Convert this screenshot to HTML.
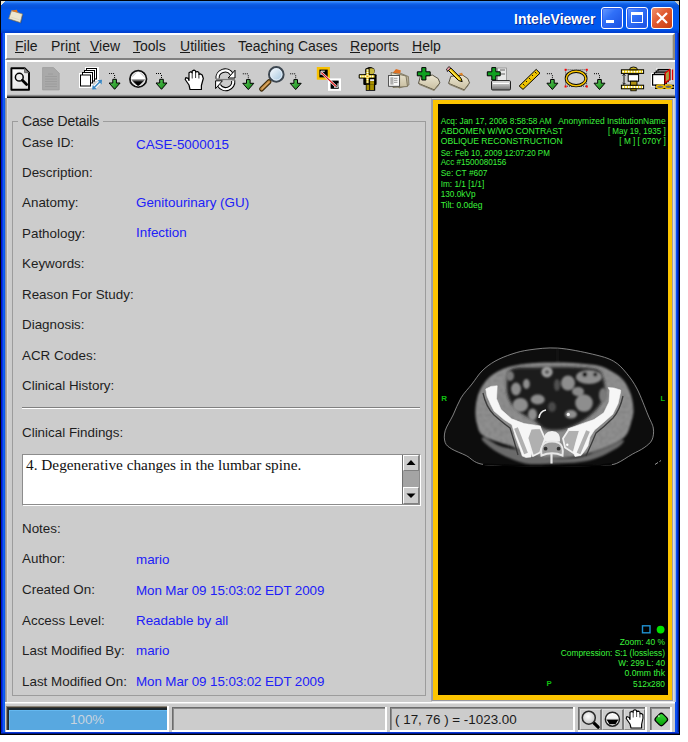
<!DOCTYPE html>
<html><head><meta charset="utf-8">
<style>
*{margin:0;padding:0;box-sizing:border-box}
html,body{width:688px;height:742px;overflow:hidden;background:#fff}
body{position:relative;font-family:"Liberation Sans",sans-serif;font-size:13px;color:#1a1a1a}
.a{position:absolute}
.t{position:absolute;white-space:nowrap;line-height:1}
.lbl{position:absolute;left:22px;white-space:nowrap;line-height:1;color:#1e1e1e;font-size:13.4px}
.val{position:absolute;left:136px;white-space:nowrap;line-height:1;color:#2020f8;font-size:13.4px}
u{text-decoration:none;background:linear-gradient(#1a1a1a,#1a1a1a) no-repeat 0 calc(100% - 1px)/100% 1px}
.sunk{position:absolute;border-top:2px solid #808080;border-left:2px solid #808080;border-right:2px solid #fff;border-bottom:2px solid #fff}
</style></head><body>
<!-- window outer -->
<div class="a" style="left:0;top:0;width:680px;height:735px;background:#000"></div>
<div class="a" style="left:1px;top:1px;width:678px;height:733px;background:linear-gradient(to right,#0018d0 0,#0018d0 1px,#0838e0 1px,#0838e0 2px,#1060f0 2px,#1060f0 3px,#0a58f0 3px,#0a58f0 674px,#0a4ef0 674px,#0a4ef0 676px,#0036d0 676px,#0036d0 677px,#001a90 677px,#001a90 678px)"></div>
<!-- title bar -->
<div class="a" style="left:1px;top:1px;width:678px;height:32px;background:linear-gradient(to bottom,#3a8cf8 0,#3a8cf8 1px,#1a6cf0 2px,#0a58e0 4px,#0452dc 7px,#0058ee 9px,#0058ee 28px,#0050e4 29px,#0040d0 31px,#0040d0 32px)"></div>
<div class="a" style="left:1px;top:1px;width:5px;height:5px;background:linear-gradient(135deg,#e8e8d8 0,#e8e8d8 40%,transparent 50%)"></div>
<div class="a" style="left:674px;top:1px;width:5px;height:5px;background:linear-gradient(225deg,#c8c8c0 0,#c8c8c0 40%,transparent 50%)"></div>
<!-- app icon -->
<svg class="a" style="left:7px;top:8px" width="18" height="17" viewBox="0 0 18 17">
<path d="M4.5 3 L15.5 6.2 L13.5 14.8 L1.8 11 Z" fill="#2a3040" opacity="0.35" transform="translate(0.8 0.8)"/>
<path d="M4.5 2.6 L15.5 6 L13.4 14.6 L1.7 10.8 Z" fill="#ece6d0" stroke="#8a7e60" stroke-width="0.7" stroke-linejoin="round"/>
<path d="M4.6 2.6 L9.8 1.8 L11 4.6 L5.2 3.2 Z" fill="#e87818"/>
<path d="M3.5 9 L12.5 11.8" stroke="#d8d0b8" stroke-width="0.6"/>
</svg>
<div class="t" style="left:514px;top:12px;font-size:14px;font-weight:bold;color:#fff;text-shadow:1px 1px 0 #0a2890">InteleViewer</div>
<!-- title buttons -->
<div class="a" style="left:601px;top:7px;width:22px;height:22px;border:1px solid #fff;border-radius:3px;background:linear-gradient(135deg,#6a9cff 0,#3070f8 40%,#1a50e0 100%);box-shadow:inset 0 0 0 1px #2c5ef0"></div>
<div class="a" style="left:606px;top:20px;width:8px;height:3px;background:#fff"></div>
<div class="a" style="left:626px;top:7px;width:22px;height:22px;border:1px solid #fff;border-radius:3px;background:linear-gradient(135deg,#6a9cff 0,#3070f8 40%,#1a50e0 100%);box-shadow:inset 0 0 0 1px #2c5ef0"></div>
<div class="a" style="left:631px;top:12px;width:12px;height:11px;border:1px solid #fff;border-top-width:3px"></div>
<div class="a" style="left:651px;top:7px;width:22px;height:22px;border:1px solid #fff;border-radius:3px;background:linear-gradient(135deg,#f0906a 0,#e05a30 45%,#c83c10 100%)"></div>
<svg class="a" style="left:651px;top:7px" width="22" height="22" viewBox="0 0 22 22"><path d="M6 6 L16 16 M16 6 L6 16" stroke="#fff" stroke-width="2.2"/></svg>

<!-- client area -->
<div class="a" id="client" style="left:5px;top:33px;width:670px;height:699px;background:#cccccc"></div>
<!-- menu bar -->
<div class="a" style="left:5px;top:33px;width:670px;height:27px;border-top:2px solid #fff;border-left:2px solid #fff;border-bottom:2px solid #808080;border-right:2px solid;border-right-color:#908878;background:#cccccc;box-shadow:inset -1px 0 0 #b8b8b0"></div>
<div class="t" style="left:15px;top:39px;font-size:14px"><u>F</u>ile</div>
<div class="t" style="left:51px;top:39px;font-size:14px">Pri<u>n</u>t</div>
<div class="t" style="left:90px;top:39px;font-size:14px"><u>V</u>iew</div>
<div class="t" style="left:133px;top:39px;font-size:14px"><u>T</u>ools</div>
<div class="t" style="left:180px;top:39px;font-size:14px"><u>U</u>tilities</div>
<div class="t" style="left:238px;top:39px;font-size:14px">Tea<u>c</u>hing Cases</div>
<div class="t" style="left:350px;top:39px;font-size:14px"><u>R</u>eports</div>
<div class="t" style="left:412px;top:39px;font-size:14px"><u>H</u>elp</div>
<!-- toolbar -->
<div class="a" style="left:5px;top:60px;width:670px;height:38px;border-top:2px solid #fff;border-left:2px solid #fff;background:linear-gradient(to bottom,#cccccc 0,#cccccc 32px,#c0c0c0 32px,#c0c0c0 33px,#8c8c8c 33px,#8c8c8c 34px,#4c4c4c 34px,#4c4c4c 35px,#101010 35px,#101010 36px)"></div>
<div id="toolbar"></div>
<svg class="a" style="left:0;top:60px" width="688" height="38" viewBox="0 60 688 38">
<defs>
<linearGradient id="gdoc" x1="0" y1="0" x2="1" y2="1"><stop offset="0" stop-color="#ffffff"/><stop offset="1" stop-color="#d8d8d8"/></linearGradient>
<linearGradient id="garr" x1="0" y1="0" x2="1" y2="1"><stop offset="0" stop-color="#60d060"/><stop offset="1" stop-color="#108010"/></linearGradient>
<linearGradient id="ghalf" x1="0" y1="0" x2="0" y2="1"><stop offset="0" stop-color="#fff"/><stop offset="0.48" stop-color="#fff"/><stop offset="0.55" stop-color="#a0a0a0"/><stop offset="0.72" stop-color="#000"/><stop offset="1" stop-color="#000"/></linearGradient>
<linearGradient id="glens" x1="0" y1="0" x2="1" y2="1"><stop offset="0" stop-color="#ffffff"/><stop offset="1" stop-color="#9cc0dc"/></linearGradient>
<linearGradient id="gfold" x1="0" y1="0" x2="0" y2="1"><stop offset="0" stop-color="#ece6d2"/><stop offset="1" stop-color="#c8bea0"/></linearGradient>
<linearGradient id="gprn" x1="0" y1="0" x2="0" y2="1"><stop offset="0" stop-color="#f0f0f0"/><stop offset="1" stop-color="#707070"/></linearGradient>
<g id="arr">
<path d="M0 0.5 h1 M2 0.5 h1 M4 0.5 h1 M5.5 2 v1 M5.5 4 v1" stroke="#000" stroke-width="1"/>
<path d="M3.7 6.3 H7.3 V10 H11 L5.5 16.3 L0 10 H3.7 Z" fill="url(#garr)" stroke="#000" stroke-width="1"/>
</g>
</defs>
<!-- 1 doc + magnifier -->
<path d="M11.4 68.2 H24.6 L29 72.6 V89.8 H11.4 Z" fill="url(#gdoc)" stroke="#000" stroke-width="1.9" stroke-linejoin="round"/>
<path d="M24.6 68.4 V72.7 H28.9" fill="#888" stroke="#666" stroke-width="1"/>
<circle cx="19.3" cy="77.2" r="3.9" fill="#f0f0f0" stroke="#000" stroke-width="1.5"/>
<path d="M22.4 80.3 L26.6 84.5" stroke="#000" stroke-width="2.8" stroke-linecap="round"/>
<!-- 2 gray doc -->
<path d="M42.6 67.6 H53.5 L59.2 73.3 V89.9 H42.6 Z" fill="#a9a9a9" stroke="#9c9c9c" stroke-width="0.8"/>
<path d="M45 76.5 H57 M45 79 H57 M45 81.5 H57 M45 84 H57 M45 86.5 H57 M48 74 H53" stroke="#9a9a9a" stroke-width="0.8"/>
<!-- 3 stacked pages -->
<g stroke="#000" stroke-width="1" fill="#fff">
<path d="M86.5 68.5 H97.5 V79.5 H86.5 Z M80.5 74.5 H91.5 V86.5 H80.5 Z" stroke="#fff" stroke-width="3"/>
<rect x="86.5" y="68.5" width="10" height="10.5"/>
<rect x="84.5" y="70.5" width="10" height="10.5"/>
<rect x="82.5" y="72.5" width="10" height="10.5"/>
<rect x="80.5" y="75" width="10" height="11"/>
</g>
<path d="M93.5 88.3 L100.8 81" stroke="#fff" stroke-width="3.5"/>
<path d="M93.5 88.3 L100.8 81" stroke="#3a88c4" stroke-width="1.6"/>
<path d="M92.2 89.6 L92.6 85 L96.8 89.2 Z M102 79.8 L101.6 84.4 L97.4 80.2 Z" fill="#3a88c4"/>
<use href="#arr" transform="translate(109.1 73)"/>
<!-- 5 half circle -->
<circle cx="138.2" cy="78.9" r="8.2" fill="#c8c8c8" stroke="#111" stroke-width="1.9"/>
<circle cx="138.2" cy="78.9" r="6.9" fill="none" stroke="#f4f4f4" stroke-width="1"/>
<path d="M131.4 78.9 Q131.4 78.2 132 77.6 L137.3 72.3 Q138.2 71.6 139.1 72.3 L144.4 77.6 Q145 78.2 145 78.9 Q145 79.6 144.4 80.2 L139.1 85.5 Q138.2 86.2 137.3 85.5 L132 80.2 Q131.4 79.6 131.4 78.9 Z" fill="url(#ghalf)"/>
<use href="#arr" transform="translate(156 73)"/>
<!-- 7 hand -->
<path d="M190 89.5 L189 85 L185.2 79.5 L185.8 77.6 L188.2 78.4 L189 80.5 V72.8 L190.7 71.8 L192.2 72.8 V71 L194 70.1 L195.6 71 V72.1 L197.4 71.5 L198.9 72.5 V74.3 L200.6 73.9 L202.2 75 L203.3 78.5 L201.4 85.5 V89.5 Z" fill="#fff" stroke="#000" stroke-width="1.2" stroke-linejoin="round"/>
<path d="M192.2 72.8 V78.5 M195.6 72.1 V78 M198.9 74.3 V78.5" stroke="#000" stroke-width="0.8"/>
<!-- 8 refresh -->
<path d="M217.6 78.6 A7.6 7.4 0 0 1 231.5 73.8" fill="none" stroke="#000" stroke-width="4.2"/>
<path d="M217.6 78.6 A7.6 7.4 0 0 1 231.5 73.8" fill="none" stroke="#fff" stroke-width="2.2"/>
<path d="M235 70.2 V78 H228.2 Z" fill="#fff" stroke="#000" stroke-width="1" stroke-linejoin="round"/>
<path d="M233.2 80.6 A7.6 7.4 0 0 1 219.1 85.4" fill="none" stroke="#000" stroke-width="4.2"/>
<path d="M233.2 80.6 A7.6 7.4 0 0 1 219.1 85.4" fill="none" stroke="#fff" stroke-width="2.2"/>
<path d="M215.6 88.6 V80.8 H222.4 Z" fill="#fff" stroke="#000" stroke-width="1" stroke-linejoin="round"/>
<path d="M216 79.5 H235" stroke="#7a7a7a" stroke-width="1.2"/>
<use href="#arr" transform="translate(242.8 73.3)"/>
<!-- 10 magnifier -->
<path d="M269 81.7 L261.6 89.1" stroke="#3a2808" stroke-width="5" stroke-linecap="round"/>
<path d="M269 81.7 L261.6 89.1" stroke="#c08840" stroke-width="2.8" stroke-linecap="round"/>
<path d="M268.4 82.4 L262.2 88.4" stroke="#e8c080" stroke-width="0.9" stroke-linecap="round"/>
<circle cx="276.3" cy="74.4" r="7.3" fill="url(#glens)" stroke="#3c4650" stroke-width="2"/>
<circle cx="276.3" cy="74.4" r="5.6" fill="none" stroke="#e4eef8" stroke-width="0.9"/>
<use href="#arr" transform="translate(290.2 73.3)"/>
<!-- 12 link squares -->
<rect x="316.8" y="67" width="13.1" height="12.7" fill="#f8c000"/>
<rect x="319.4" y="69.6" width="8.3" height="7.8" fill="#000"/>
<rect x="328" y="78.4" width="13" height="12.4" fill="#fff"/>
<rect x="330.6" y="80.6" width="8.1" height="8.2" fill="#000"/>
<path d="M321 75 V71.2 H324.8 M338 83.2 V87.2 H334" fill="none" stroke="#fff" stroke-width="1"/>
<path d="M321.4 72.6 L336 86.4" stroke="#fff" stroke-width="2.4"/>
<path d="M321.4 72.6 L336 86.4" stroke="#e01010" stroke-width="1.3"/>
<!-- 13 figure with cross -->
<ellipse cx="370" cy="71" rx="4.8" ry="4" fill="#000"/>
<rect x="363.3" y="74.3" width="13.3" height="10.6" rx="1" fill="#000"/>
<rect x="365.8" y="84.5" width="9.4" height="6.3" fill="#000"/>
<ellipse cx="371.2" cy="71.2" rx="3.3" ry="3" fill="#c8b840"/>
<rect x="370.1" y="79.2" width="4" height="1.9" fill="#f0f0f0"/>
<rect x="370.1" y="81.1" width="4" height="3.5" fill="#a89000"/>
<rect x="366.5" y="84.6" width="2.8" height="5.4" fill="#a89000"/>
<rect x="370.1" y="84.6" width="3.8" height="5.4" fill="#a89000"/>
<path d="M365.9 68.8 H369.1 V74.7 H375 V78.1 H369.1 V83.8 H365.9 V78.1 H359.2 V74.7 H365.9 Z" fill="#f8dc30" stroke="#000" stroke-width="1"/>
<path d="M360 76.4 H374.4" stroke="#fff" stroke-width="1.8" stroke-dasharray="1.2 1.2"/>
<path d="M367.5 69.4 V83.3" stroke="#fff" stroke-width="1.8" stroke-dasharray="1.2 1.2"/>
<circle cx="367.5" cy="76.4" r="0.9" fill="#f0a000"/>
<!-- 14 folder doc -->
<path d="M395 71 L408.4 76.5 L409 85 L399 88 Z" fill="#b8b09a" stroke="#706850" stroke-width="0.7"/>
<path d="M392.6 73 L396 69 L401 70.5 L400 73.5 Z" fill="#e07020"/>
<path d="M391 72.5 L406 76 L407.5 86.5 L393 87.5 Z" fill="url(#gfold)" stroke="#706850" stroke-width="0.8"/>
<rect x="388.6" y="75.5" width="11" height="10.8" fill="#fafafa" stroke="#404040" stroke-width="0.9"/>
<rect x="390.3" y="77.2" width="3.2" height="7.4" fill="#b0b0b0"/>
<path d="M394 78.3 H397.5 M394 80.3 H397.5 M394 82.3 H397.5" stroke="#808080" stroke-width="0.8"/>
<!-- 15 folder plus -->
<path d="M420.3 76.4 L432.5 75.1 L438.2 78.6 L439.9 82.9 L434.2 89.9 L418.5 83.4 Z" fill="url(#gfold)" stroke="#4a4434" stroke-width="0.9" stroke-linejoin="round"/>
<path d="M418.8 83.4 L434.2 89.9 L439.9 82.9 L438.5 86 L434 91 L419.5 85 Z" fill="#8a826c"/>
<path d="M421.8 67.6 H425.9 V71.8 H430.2 V75.8 H425.9 V80 H421.8 V75.8 H417.3 V71.8 H421.8 Z" fill="#10a020" stroke="#000" stroke-width="1"/>
<!-- 16 folder pencil -->
<path d="M450.8 76.4 L462.6 75.1 L467.8 78.6 L469.5 82.9 L464.3 89.9 L448.6 83.4 Z" fill="url(#gfold)" stroke="#4a4434" stroke-width="0.9" stroke-linejoin="round"/>
<path d="M448.9 83.4 L464.3 89.9 L469.5 82.9 L468.2 86 L464 91 L449.6 85 Z" fill="#8a826c"/>
<path d="M458 74 L462 72.8 L463.5 76 Z" fill="#e08020"/>
<path d="M447.6 71.3 L450.8 68 L461 78.2 L462.2 81.6 L458.6 80.6 L448.4 70.4 Z" fill="#f0c800" stroke="#000" stroke-width="1" stroke-linejoin="round"/>
<path d="M449.5 69.5 L459.8 79.6" stroke="#fff0a0" stroke-width="0.8"/>
<path d="M447.6 71.3 L450.8 68 L449 66.6 L446.4 69.2 Z" fill="#f0a0a8" stroke="#000" stroke-width="0.8"/>
<!-- 17 plus printer -->
<rect x="497.5" y="68" width="9" height="13" fill="#e8e8e8" stroke="#909090" stroke-width="0.8"/>
<path d="M500 70 H505 M500 74 H505" stroke="#606060" stroke-width="1"/>
<rect x="491.5" y="80.6" width="19" height="9.4" rx="1.2" fill="url(#gprn)" stroke="#202020" stroke-width="1"/>
<path d="M493 83.5 H509" stroke="#fff" stroke-width="1"/>
<path d="M491.8 67.6 H495.9 V71.8 H500.2 V75.8 H495.9 V80 H491.8 V75.8 H487.3 V71.8 H491.8 Z" fill="#10a020" stroke="#000" stroke-width="1"/>
<!-- 18 ruler -->
<path d="M519.2 86 L536.2 69.4 L540 73.2 L523 89.4 Z" fill="#f0c400" stroke="#000" stroke-width="1"/>
<path d="M523 84 L524.5 85.5 M526 81 L527 82 M529 78 L530.5 79.5 M532 75 L533 76 M535 72 L536.5 73.5" stroke="#000" stroke-width="0.9"/>
<use href="#arr" transform="translate(546.9 73.2)"/>
<!-- 20 ellipse -->
<path d="M565.6 69.8 H586.6 V86.2 H565.6 Z" fill="none" stroke="#000" stroke-width="0.7" stroke-dasharray="1 1"/>
<rect x="564.6" y="68.8" width="2" height="2" fill="#f00"/><rect x="585.8" y="68.8" width="2" height="2" fill="#f00"/>
<rect x="564.6" y="85.5" width="2" height="2" fill="#f00"/><rect x="585.8" y="85.5" width="2" height="2" fill="#f00"/>
<ellipse cx="576.1" cy="78.5" rx="9.8" ry="7.2" fill="#d0d0d0" stroke="#000" stroke-width="3.2"/>
<ellipse cx="576.1" cy="78.5" rx="9.8" ry="7.2" fill="none" stroke="#f8c400" stroke-width="1.6"/>
<use href="#arr" transform="translate(594 73.2)"/>
<!-- 22 film -->
<rect x="621.4" y="69.8" width="22.2" height="3.6" fill="#f4d000" stroke="#000" stroke-width="1"/>
<path d="M622.4 71.6 H643" stroke="#fff" stroke-width="1.8" stroke-dasharray="1.6 1.2"/>
<rect x="621.4" y="85.2" width="22.2" height="3.6" fill="#f4d000" stroke="#000" stroke-width="1"/>
<path d="M622.4 87 H643" stroke="#fff" stroke-width="1.8" stroke-dasharray="1.6 1.2"/>
<path d="M629.5 69.8 A4 2.8 0 0 1 637.5 69.8 Z" fill="#c8b020" stroke="#000" stroke-width="0.9"/>
<rect x="628.2" y="74.6" width="10.4" height="6.6" fill="#fff" stroke="#000" stroke-width="1"/>
<rect x="630.4" y="81.2" width="6.6" height="4" fill="#b09010" stroke="#000" stroke-width="0.9"/>
<rect x="630.8" y="88.8" width="5.4" height="2" fill="#b09010" stroke="#000" stroke-width="0.8"/>
<path d="M624 74.2 V84.4 M622.6 75.6 L624 74.2 L625.4 75.6 M622.6 83 L624 84.4 L625.4 83" fill="none" stroke="#000" stroke-width="0.9"/>
<!-- 23 last icon -->
<g stroke="#000" stroke-width="1.2" fill="#fff">
<rect x="658" y="69.4" width="12" height="10.5" stroke="#fff" stroke-width="3"/>
<rect x="652.6" y="74.6" width="12" height="10.5" stroke="#fff" stroke-width="3"/>
<rect x="658" y="69.4" width="12" height="10.5"/>
<rect x="656.2" y="71.1" width="12" height="10.5"/>
<rect x="654.4" y="72.8" width="12" height="10.5"/>
<rect x="652.6" y="74.6" width="12" height="10.5"/>
</g>
<path d="M665.2 73 L669.5 69.8 V79.5 L665.2 83 Z" fill="#a8a040" stroke="#e00000" stroke-width="1.2"/>
<path d="M672.5 69.5 V80" stroke="#e00000" stroke-width="1.4"/>
<path d="M655 85.6 H674 M655 88.2 H674" stroke="#000" stroke-width="1.6"/>
<ellipse cx="660.2" cy="86.8" rx="3.8" ry="1.8" fill="none" stroke="#f0c000" stroke-width="1.3"/>
<ellipse cx="668.4" cy="86.8" rx="3.8" ry="1.8" fill="none" stroke="#f0c000" stroke-width="1.3"/>
</svg>


<!-- left panel -->
<div id="left"></div>
<div class="a" style="left:5px;top:98px;width:3px;height:604px;background:linear-gradient(to right,#8890a8 0,#8890a8 1px,#aaa498 1px,#aaa498 2px,#d8d8d8 2px)"></div>
<div class="a" style="left:12px;top:121px;width:414px;height:575px;border:1px solid #9c9c9c"></div>
<div class="t" style="left:18px;top:114px;padding:0 4px;background:#cccccc;font-size:14px;letter-spacing:-0.2px;color:#1e1e1e">Case Details</div>
<div class="lbl" style="top:136px">Case ID:</div>
<div class="val" style="top:138px">CASE-5000015</div>
<div class="lbl" style="top:166px">Description:</div>
<div class="lbl" style="top:196px">Anatomy:</div>
<div class="val" style="top:196px">Genitourinary (GU)</div>
<div class="lbl" style="top:227px">Pathology:</div>
<div class="val" style="top:226px">Infection</div>
<div class="lbl" style="top:257px">Keywords:</div>
<div class="lbl" style="top:288px">Reason For Study:</div>
<div class="lbl" style="top:318px">Diagnosis:</div>
<div class="lbl" style="top:349px">ACR Codes:</div>
<div class="lbl" style="top:379px">Clinical History:</div>
<div class="a" style="left:22px;top:407px;width:398px;height:2px;background:linear-gradient(to bottom,#808080 0,#808080 1px,#fff 1px)"></div>
<div class="lbl" style="top:426px">Clinical Findings:</div>
<div class="a" style="left:22px;top:454px;width:399px;height:52px;border-top:1px solid #808080;border-left:1px solid #808080;border-right:1px solid #fff;border-bottom:1px solid #fff;background:#fff"></div>
<div class="a" style="left:22px;top:454px;width:398px;height:51px;border:1px solid #8c8c8c"></div>
<div class="t" style="left:26px;top:457px;font-family:'Liberation Serif',serif;font-size:15.3px;color:#111">4. Degenerative changes in the lumbar spine.</div>
<div class="a" style="left:402px;top:455px;width:17px;height:49px;background:#a4a4a4;border-left:1px solid #707070"></div>
<div class="a" style="left:403px;top:455px;width:16px;height:16px;background:#cccccc;border-top:1px solid #fff;border-left:1px solid #fff;border-right:1px solid #808080;border-bottom:1px solid #808080"></div>
<div class="a" style="left:403px;top:487px;width:16px;height:17px;background:#cccccc;border-top:1px solid #fff;border-left:1px solid #fff;border-right:1px solid #808080;border-bottom:1px solid #808080"></div>
<svg class="a" style="left:403px;top:455px" width="16" height="49"><path d="M3.5 10 L8 5 L12.5 10 Z" fill="#000"/><path d="M3.5 38.5 L8 43 L12.5 38.5 Z" fill="#000"/></svg>
<div class="lbl" style="top:522px">Notes:</div>
<div class="lbl" style="top:552px">Author:</div>
<div class="val" style="top:553px">mario</div>
<div class="lbl" style="top:583px">Created On:</div>
<div class="val" style="top:584px;letter-spacing:-0.1px">Mon Mar 09 15:03:02 EDT 2009</div>
<div class="lbl" style="top:614px">Access Level:</div>
<div class="val" style="top:614px">Readable by all</div>
<div class="lbl" style="top:644px">Last Modified By:</div>
<div class="val" style="top:644px">mario</div>
<div class="lbl" style="top:675px">Last Modified On:</div>
<div class="val" style="top:675px;letter-spacing:-0.1px">Mon Mar 09 15:03:02 EDT 2009</div>


<!-- viewer -->
<div class="a" style="left:675px;top:98px;width:1px;height:604px;background:#90b4f4"></div>
<div class="a" style="left:431px;top:98px;width:243px;height:604px;background:#9c9ca4;border-left:1px solid #a0a0a8;border-top:1px solid #d4d4d4;border-right:1px solid #dcdcdc;border-bottom:1px solid #e8e8e8"></div>
<div class="a" style="left:432px;top:99px;width:241px;height:602px;border-right:1px solid #a0a0a8;border-bottom:1px solid #9898a0"></div>
<div class="a" style="left:433px;top:100px;width:239px;height:600px;background:#000;border-style:solid;border-color:#fcc400;border-width:4px 4px 5px 5px"></div>
<svg class="a" style="left:438px;top:104px" width="230" height="591" viewBox="438 104 230 591">
<defs><filter id="tex" x="0" y="0" width="100%" height="100%"><feTurbulence type="fractalNoise" baseFrequency="0.35" numOctaves="2" seed="3" result="n"/><feColorMatrix in="n" type="matrix" values="0 0 0 0 0  0 0 0 0 0  0 0 0 0 0  0 0 0 -2.2 1.3" result="a"/><feComposite in="SourceGraphic" in2="a" operator="in"/></filter><filter id="bl0" x="-10%" y="-10%" width="120%" height="120%"><feGaussianBlur stdDeviation="0.35"/></filter><filter id="bl" x="-10%" y="-10%" width="120%" height="120%"><feGaussianBlur stdDeviation="0.8"/></filter>
<filter id="bl2" x="-10%" y="-10%" width="120%" height="120%"><feGaussianBlur stdDeviation="1.6"/></filter></defs>
<path d="M557.8 348.1 C547.3 347.4 537.5 348.8 529.9 349.8 C522.3 350.8 517.8 352.1 512.0 354.0 C506.2 355.9 500.0 358.4 495.0 361.2 C490.0 364.0 485.8 367.2 482.0 371.0 C478.2 374.8 475.5 379.5 472.0 384.0 C468.5 388.5 464.1 392.7 461.0 397.9 C457.9 403.1 455.7 409.5 453.1 415.0 C450.5 420.5 446.5 426.1 445.2 430.7 C443.9 435.3 444.1 439.4 445.2 442.5 C446.3 445.6 448.3 446.8 451.8 449.0 C455.3 451.2 461.2 453.1 466.2 455.6 C471.2 458.1 473.1 462.5 481.9 464.2 C490.7 465.9 506.7 465.3 518.9 465.6 C531.1 465.9 543.5 466.0 555.0 466.0 C566.5 466.0 579.5 465.8 588.0 465.6 C596.5 465.4 601.4 465.3 606.2 464.9 C611.0 464.5 612.2 465.2 616.6 463.4 C621.0 461.6 627.7 456.8 632.3 454.2 C636.9 451.6 640.8 450.1 644.1 447.7 C647.4 445.3 650.5 443.2 652.0 439.9 C653.5 436.6 654.0 432.2 653.3 428.1 C652.6 424.0 650.7 421.5 648.0 415.0 C645.3 408.5 640.8 396.1 637.2 389.1 C633.6 382.2 630.5 378.0 626.6 373.3 C622.7 368.6 619.2 364.4 613.6 361.2 C608.0 358.0 602.0 356.4 592.7 354.2 C583.4 352.0 568.3 348.8 557.8 348.1Z" fill="#0e0e0e" stroke="#a8a8a8" stroke-width="0.75" filter="url(#bl0)"/>
<path d="M483 464.3 Q500 465.2 518.9 465.6 L555 466 L588 465.6 Q600 465.2 612 463.8" fill="none" stroke="#050505" stroke-width="1.8"/>
<g filter="url(#bl)">
<path d="M557.8 362.5 C565.3 362.6 573.0 362.9 580.0 363.5 C587.0 364.1 594.1 364.5 599.7 366.0 C605.3 367.5 609.6 370.0 613.6 372.5 C617.6 375.0 621.1 377.2 624.0 381.0 C626.9 384.8 629.4 390.2 631.0 395.0 C632.6 399.8 633.4 405.7 633.5 410.0 C633.6 414.3 632.9 416.6 631.5 421.0 C630.1 425.4 629.1 432.2 625.0 436.5 C620.9 440.8 614.5 443.6 607.0 446.8 C599.5 450.0 588.7 453.7 580.0 455.5 C571.3 457.3 563.3 458.0 555.0 457.8 C546.7 457.6 537.0 456.3 530.0 454.5 C523.0 452.7 521.0 450.1 513.3 447.0 C505.6 443.9 490.1 440.0 484.0 436.2 C477.9 432.4 478.4 428.4 477.0 424.0 C475.6 419.6 475.3 414.8 475.5 410.0 C475.7 405.2 476.4 399.7 478.0 395.0 C479.6 390.3 482.0 385.8 485.0 382.0 C488.0 378.2 491.4 375.2 496.0 372.5 C500.6 369.8 505.9 367.6 512.4 366.0 C518.9 364.4 527.4 363.6 535.0 363.0 C542.6 362.4 550.3 362.4 557.8 362.5Z" fill="#909090"/>
<path d="M484.5 437.5 C487.3 438.3 494.3 443.9 500.0 446.0 C505.7 448.1 511.8 448.4 518.5 450.0 C525.2 451.6 533.9 454.1 540.0 455.5 C546.1 456.9 548.3 458.2 555.0 458.5 C561.7 458.8 571.5 458.8 580.0 457.0 C588.5 455.2 599.0 450.3 606.2 447.5 C613.4 444.7 621.0 440.2 623.2 440.0 C625.4 439.8 623.1 443.6 619.2 446.4 C615.3 449.2 606.1 454.3 599.6 456.9 C593.1 459.5 587.4 461.0 580.0 462.1 C572.6 463.2 564.2 463.3 555.0 463.5 C545.8 463.7 534.4 465.2 525.0 463.4 C515.6 461.6 505.9 456.6 498.9 452.9 C491.9 449.2 485.6 443.8 483.2 441.2 C480.8 438.6 481.7 436.7 484.5 437.5Z" fill="#6a6a6a"/>
<path d="M557.8 362.5 C565.3 362.6 573.0 362.9 580.0 363.5 C587.0 364.1 594.1 364.5 599.7 366.0 C605.3 367.5 609.6 370.0 613.6 372.5 C617.6 375.0 621.1 377.2 624.0 381.0 C626.9 384.8 629.4 390.2 631.0 395.0 C632.6 399.8 633.4 405.7 633.5 410.0 C633.6 414.3 632.9 416.6 631.5 421.0 C630.1 425.4 629.1 432.2 625.0 436.5 C620.9 440.8 614.5 443.6 607.0 446.8 C599.5 450.0 588.7 453.7 580.0 455.5 C571.3 457.3 563.3 458.0 555.0 457.8 C546.7 457.6 537.0 456.3 530.0 454.5 C523.0 452.7 521.0 450.1 513.3 447.0 C505.6 443.9 490.1 440.0 484.0 436.2 C477.9 432.4 478.4 428.4 477.0 424.0 C475.6 419.6 475.3 414.8 475.5 410.0 C475.7 405.2 476.4 399.7 478.0 395.0 C479.6 390.3 482.0 385.8 485.0 382.0 C488.0 378.2 491.4 375.2 496.0 372.5 C500.6 369.8 505.9 367.6 512.4 366.0 C518.9 364.4 527.4 363.6 535.0 363.0 C542.6 362.4 550.3 362.4 557.8 362.5Z" fill="#000" opacity="0.15" filter="url(#tex)"/>
<path d="M557.8 362.5 L557.8 349" stroke="#222" stroke-width="1"/>
</g>
<path d="M512.0 369.0 C516.7 366.9 527.5 367.8 535.0 367.5 C542.5 367.2 549.5 367.0 557.0 367.0 C564.5 367.0 573.2 367.0 580.0 367.5 C586.8 368.0 594.2 368.2 598.0 370.0 C601.8 371.8 601.8 374.7 603.0 378.0 C604.2 381.3 605.3 385.8 605.0 390.0 C604.7 394.2 602.8 399.3 601.0 403.0 C599.2 406.7 596.8 409.2 594.0 412.0 C591.2 414.8 587.5 417.7 584.0 420.0 C580.5 422.3 577.0 424.3 573.0 426.0 C569.0 427.7 564.7 429.5 560.0 430.0 C555.3 430.5 549.2 430.5 545.0 429.0 C540.8 427.5 538.5 423.3 535.0 421.0 C531.5 418.7 527.5 417.3 524.0 415.0 C520.5 412.7 516.7 410.2 514.0 407.0 C511.3 403.8 509.2 400.5 508.0 396.0 C506.8 391.5 506.3 384.5 507.0 380.0 C507.7 375.5 507.3 371.1 512.0 369.0Z" fill="#1e1e1e" filter="url(#bl2)"/>
<g filter="url(#bl)" fill="#8e8e8e">
<ellipse cx="547" cy="372" rx="5.6" ry="5.4" fill="#a4a4a4"/>
<ellipse cx="547" cy="372" rx="2.5" ry="2.3" fill="#5a5a5a"/>
<ellipse cx="516" cy="389" rx="5" ry="6.5"/>
<ellipse cx="526.4" cy="384" rx="3.4" ry="5"/>
<ellipse cx="520.3" cy="405" rx="7.8" ry="7"/>
<ellipse cx="537.7" cy="399.5" rx="7" ry="5"/>
<ellipse cx="568" cy="383" rx="7" ry="7.5"/>
<ellipse cx="584" cy="403" rx="8.8" ry="8.8"/>
<ellipse cx="589" cy="377" rx="13" ry="7"/>
<circle cx="584.8" cy="374.5" r="2.4" fill="#050505"/><circle cx="595.3" cy="374.5" r="2" fill="#050505"/>
<ellipse cx="571" cy="414.3" rx="6" ry="4.3"/>
<ellipse cx="532.5" cy="414.4" rx="4.5" ry="6"/>
<ellipse cx="578" cy="391.5" rx="6" ry="4.5" fill="#8a8a8a"/>
<ellipse cx="603" cy="395" rx="4" ry="7" fill="#7a7a7a"/>
<ellipse cx="510" cy="376" rx="4" ry="5" fill="#7a7a7a"/>
<ellipse cx="557" cy="385" rx="3" ry="6" fill="#505050"/>
<ellipse cx="552" cy="407" rx="4" ry="5" fill="#4a4a4a"/>
</g>
<g filter="url(#bl0)">
<path d="M539 418 Q540 411 546 410" fill="none" stroke="#f0f0f0" stroke-width="1.6"/>
<circle cx="568.3" cy="414.4" r="1.6" fill="#f4f4f4"/>
<path d="M483 393 Q486 407 494 415 Q503 423 510 428 Q514 440 518 455" fill="none" stroke="#3a3a3a" stroke-width="1.3"/>
<path d="M623 396 Q620 410 613 418 Q604 427 596 433 Q591 445 586 456" fill="none" stroke="#3a3a3a" stroke-width="1.3"/>
<path d="M531.0 428.5 L540.0 427.5 L545.0 438.6 L540.0 452.5 L533.0 456.0 L527.5 438.0Z" fill="#b0b0b0" stroke="#f0f0f0" stroke-width="1.8" stroke-linejoin="round"/>
<path d="M568.5 430.0 L580.0 430.0 L577.0 440.0 L573.5 453.0 L565.0 447.5 L563.0 438.6Z" fill="#b0b0b0" stroke="#f0f0f0" stroke-width="1.8" stroke-linejoin="round"/>
<path d="M485.8 389.0 L491.0 386.4 L497.2 385.8 L496.5 398.8 L501.0 409.5 L511.5 418.8 L524.0 423.6 L535.4 425.2 L540.3 426.0 L541.0 428.8 L531.0 428.8 L527.5 438.0 L531.5 453.5 L531.0 457.0 L526.0 457.5 L522.3 456.1 L519.7 448.3 L515.8 437.8 L511.9 424.7 L504.0 419.5 L494.0 411.0 L490.5 404.0 L487.0 396.0Z" fill="#f6f6f6" stroke="#f6f6f6" stroke-width="0.6" stroke-linejoin="round"/>
<path d="M608.2 387.6 L614.0 388.0 L620.6 390.0 L620.6 392.0 L618.0 403.8 L612.8 414.2 L602.3 423.4 L594.5 430.0 L590.0 437.0 L588.0 445.7 L585.3 450.0 L581.0 455.5 L575.0 456.5 L573.5 453.0 L577.0 440.0 L580.0 430.0 L568.5 430.0 L567.8 428.8 L583.0 423.4 L594.0 419.6 L603.8 412.8 L609.0 402.0 L609.8 390.7Z" fill="#f6f6f6" stroke="#f6f6f6" stroke-width="0.6" stroke-linejoin="round"/>
<path d="M516 428 L526 453.5" stroke="#b0b0b0" stroke-width="4"/>
<path d="M588 431 L578.5 453.5" stroke="#b0b0b0" stroke-width="4"/>
<path d="M544 441.5 Q543 431.5 552 431 Q561 431.5 560 441.5 Q552 443 544 441.5 Z" fill="#f0f0f0"/>
<path d="M541.5 455.5 Q540 446 545 443 Q552 440 559 443 Q564 446 562.5 455.5 Q552 451 541.5 455.5 Z" fill="#9a9a9a" stroke="#e8e8e8" stroke-width="2"/>
<circle cx="545.6" cy="448.7" r="1.9" fill="#303030"/><circle cx="558.6" cy="448.7" r="1.9" fill="#303030"/>
<path d="M551.5 454 V463.5" stroke="#e8e8e8" stroke-width="2.2"/>
<circle cx="567.3" cy="444.7" r="1.2" fill="#fff"/>
</g>
<path d="M655 464.5 L658 462.5 M659.5 461.5 L661 460.5" stroke="#9a9a9a" stroke-width="1"/>
<g font-family="Liberation Sans" font-size="8.4" fill="#3cf43c">
<text x="440.7" y="124.2" textLength="111.0" lengthAdjust="spacingAndGlyphs">Acq: Jan 17, 2006 8:58:58 AM</text>
<text x="440.9" y="133.6" textLength="122.4" lengthAdjust="spacingAndGlyphs">ABDOMEN W/WO CONTRAST</text>
<text x="440.7" y="144.4" textLength="122.0" lengthAdjust="spacingAndGlyphs">OBLIQUE RECONSTRUCTION</text>
<text x="440.7" y="155.6" textLength="109.2" lengthAdjust="spacingAndGlyphs">Se: Feb 10, 2009 12:07:20 PM</text>
<text x="440.7" y="165.4" textLength="65.6" lengthAdjust="spacingAndGlyphs">Acc #1500080156</text>
<text x="440.7" y="176.3" textLength="46.8" lengthAdjust="spacingAndGlyphs">Se: CT #607</text>
<text x="440.7" y="186.8" textLength="43.5" lengthAdjust="spacingAndGlyphs">Im: 1/1 [1/1]</text>
<text x="440.7" y="197.2" textLength="34.8" lengthAdjust="spacingAndGlyphs">130.0kVp</text>
<text x="440.7" y="207.7" textLength="41.8" lengthAdjust="spacingAndGlyphs">Tilt: 0.0deg</text>
<text x="558.2" y="124.2" textLength="107.4" lengthAdjust="spacingAndGlyphs">Anonymized InstitutionName</text>
<text x="607.9" y="133.6" textLength="57.8" lengthAdjust="spacingAndGlyphs">[ May 19, 1935 ]</text>
<text x="619.3" y="144.4" textLength="46.6" lengthAdjust="spacingAndGlyphs">[ M ] [ 070Y ]</text>
<text x="619.7" y="644.7" textLength="45.3" lengthAdjust="spacingAndGlyphs">Zoom: 40 %</text>
<text x="560.7" y="655.5" textLength="104.3" lengthAdjust="spacingAndGlyphs">Compression: S:1 (lossless)</text>
<text x="618.3" y="665.6" textLength="46.7" lengthAdjust="spacingAndGlyphs">W: 299 L: 40</text>
<text x="624.4" y="675.7" textLength="40.6" lengthAdjust="spacingAndGlyphs">0.0mm thk</text>
<text x="633.1" y="686.5" textLength="31.9" lengthAdjust="spacingAndGlyphs">512x280</text>
</g>
<g font-family="Liberation Sans" font-size="8" fill="#10c010" font-weight="bold">
<text x="441.3" y="400.8" textLength="5.8" lengthAdjust="spacingAndGlyphs">R</text>
<text x="660.5" y="401" textLength="4.6" lengthAdjust="spacingAndGlyphs">L</text>
<text x="546.5" y="685.8" textLength="5.2" lengthAdjust="spacingAndGlyphs">P</text>
</g>
<rect x="642.5" y="625.8" width="7.5" height="7" fill="none" stroke="#2090d0" stroke-width="1.4"/>
<circle cx="660.6" cy="629.6" r="3.9" fill="#00e000"/>
</svg>
<!-- status bar -->
<div class="a" style="left:1px;top:732px;width:678px;height:2px;background:linear-gradient(to bottom,#0838d8 0,#0838d8 1px,#001888 1px)"></div>
<div class="a" style="left:5px;top:702px;width:670px;height:2px;background:linear-gradient(to bottom,#fff 0,#fff 1px,#e4e4e4 1px)"></div>
<div class="a" style="left:6px;top:706px;width:163px;height:26px;background:#fff"></div>
<div class="a" style="left:6px;top:706px;width:161px;height:24px;background:#8a8478"></div>
<div class="a" style="left:7px;top:707px;width:160px;height:23px;background:#3c3830"></div>
<div class="a" style="left:8px;top:708px;width:159px;height:22px;background:#1c2830"></div>
<div class="a" style="left:9px;top:710px;width:158px;height:20px;background:#58a8e0;border-top:1px solid #64b8f0;border-left:1px solid #64b8f0"></div>
<div class="t" style="left:70px;top:713px;font-size:13.4px;color:#c8d4de">100%</div>
<div class="a" style="left:172px;top:707px;width:215px;height:25px;background:#fff"></div>
<div class="a" style="left:172px;top:707px;width:213px;height:23px;background:#6c6c6c"></div>
<div class="a" style="left:173px;top:708px;width:212px;height:22px;background:#8c8c8c"></div>
<div class="a" style="left:174px;top:709px;width:211px;height:21px;background:#cccccc"></div>
<div class="a" style="left:390px;top:707px;width:185px;height:25px;background:#fff"></div>
<div class="a" style="left:390px;top:707px;width:183px;height:23px;background:#6c6c6c"></div>
<div class="a" style="left:391px;top:708px;width:182px;height:22px;background:#8c8c8c"></div>
<div class="a" style="left:392px;top:709px;width:181px;height:21px;background:#cccccc"></div>
<div class="t" style="left:395px;top:713px;font-size:13.4px;color:#1a1a1a">( 17, 76 ) = -1023.00</div>
<div class="a" style="left:578px;top:707px;width:69px;height:25px;background:#fff"></div>
<div class="a" style="left:578px;top:707px;width:67px;height:23px;background:#6c6c6c"></div>
<div class="a" style="left:579px;top:708px;width:66px;height:22px;background:#8c8c8c"></div>
<div class="a" style="left:580px;top:709px;width:65px;height:21px;background:#cccccc"></div>
<div class="a" style="left:580px;top:709px;width:22px;height:21px;border-left:1px solid #dcdcdc;border-top:1px solid #dcdcdc;border-right:2px solid #7c7c7c;border-bottom:1px solid #8c8c8c"></div>
<div class="a" style="left:602px;top:709px;width:22px;height:21px;border-left:1px solid #dcdcdc;border-top:1px solid #dcdcdc;border-right:2px solid #7c7c7c;border-bottom:1px solid #8c8c8c"></div>
<div class="a" style="left:624px;top:709px;width:21px;height:21px;border-left:1px solid #dcdcdc;border-top:1px solid #dcdcdc;border-right:1px solid #7c7c7c;border-bottom:1px solid #8c8c8c"></div>
<div class="a" style="left:650px;top:707px;width:22px;height:25px;background:#fff"></div>
<div class="a" style="left:650px;top:707px;width:20px;height:23px;background:#6c6c6c"></div>
<div class="a" style="left:651px;top:708px;width:19px;height:22px;background:#8c8c8c"></div>
<div class="a" style="left:652px;top:709px;width:18px;height:21px;background:#cccccc"></div>
<svg class="a" style="left:0;top:700px" width="688" height="36" viewBox="0 700 688 36">
<defs>
<radialGradient id="slens" cx="0.45" cy="0.4" r="0.6"><stop offset="0" stop-color="#ffffff"/><stop offset="1" stop-color="#c4c4c4"/></radialGradient>
<linearGradient id="sgreen" x1="0" y1="0" x2="1" y2="1"><stop offset="0" stop-color="#40e040"/><stop offset="1" stop-color="#009a00"/></linearGradient>
</defs>
<path d="M593.8 722.8 L598.2 727.2" stroke="#000" stroke-width="3.2" stroke-linecap="round"/>
<circle cx="588.8" cy="717.7" r="6.5" fill="url(#slens)" stroke="#2a2a2a" stroke-width="1.5"/>
<circle cx="612.4" cy="719.2" r="7" fill="#fff" stroke="#222" stroke-width="1.5"/>
<path d="M606.5 719 L609.5 714.5 H615.5 L618.5 719 Z" fill="#f4f4f4"/>
<path d="M606.5 719.6 H618.5 L615.5 724.2 H609.5 Z" fill="#000"/>
<path d="M606.8 719.4 H618.2" stroke="#888" stroke-width="0.8"/>
<path d="M631 728 L630 724 L626.2 718.5 L626.8 716.6 L629.2 717.4 L630 719.5 V712.3 L631.7 711.4 L633.2 712.3 V710.6 L635 709.8 L636.6 710.6 V711.6 L638.4 711.1 L639.9 712.1 V713.8 L641.4 713.5 L642.8 714.5 L643 718 L641.6 724.5 V728 Z" fill="#fff" stroke="#000" stroke-width="1.1" stroke-linejoin="round"/>
<path d="M633.2 712.3 V717.5 M636.6 711.6 V717 M639.9 713.8 V717.5" stroke="#000" stroke-width="0.7"/>
<rect x="-5.1" y="-5.1" width="10.2" height="10.2" rx="2.6" transform="translate(661.3 719.5) rotate(45)" fill="url(#sgreen)" stroke="#000" stroke-width="1.3"/>
<circle cx="658.8" cy="716.3" r="1" fill="#a0f0a0"/>
</svg>
</body></html>
